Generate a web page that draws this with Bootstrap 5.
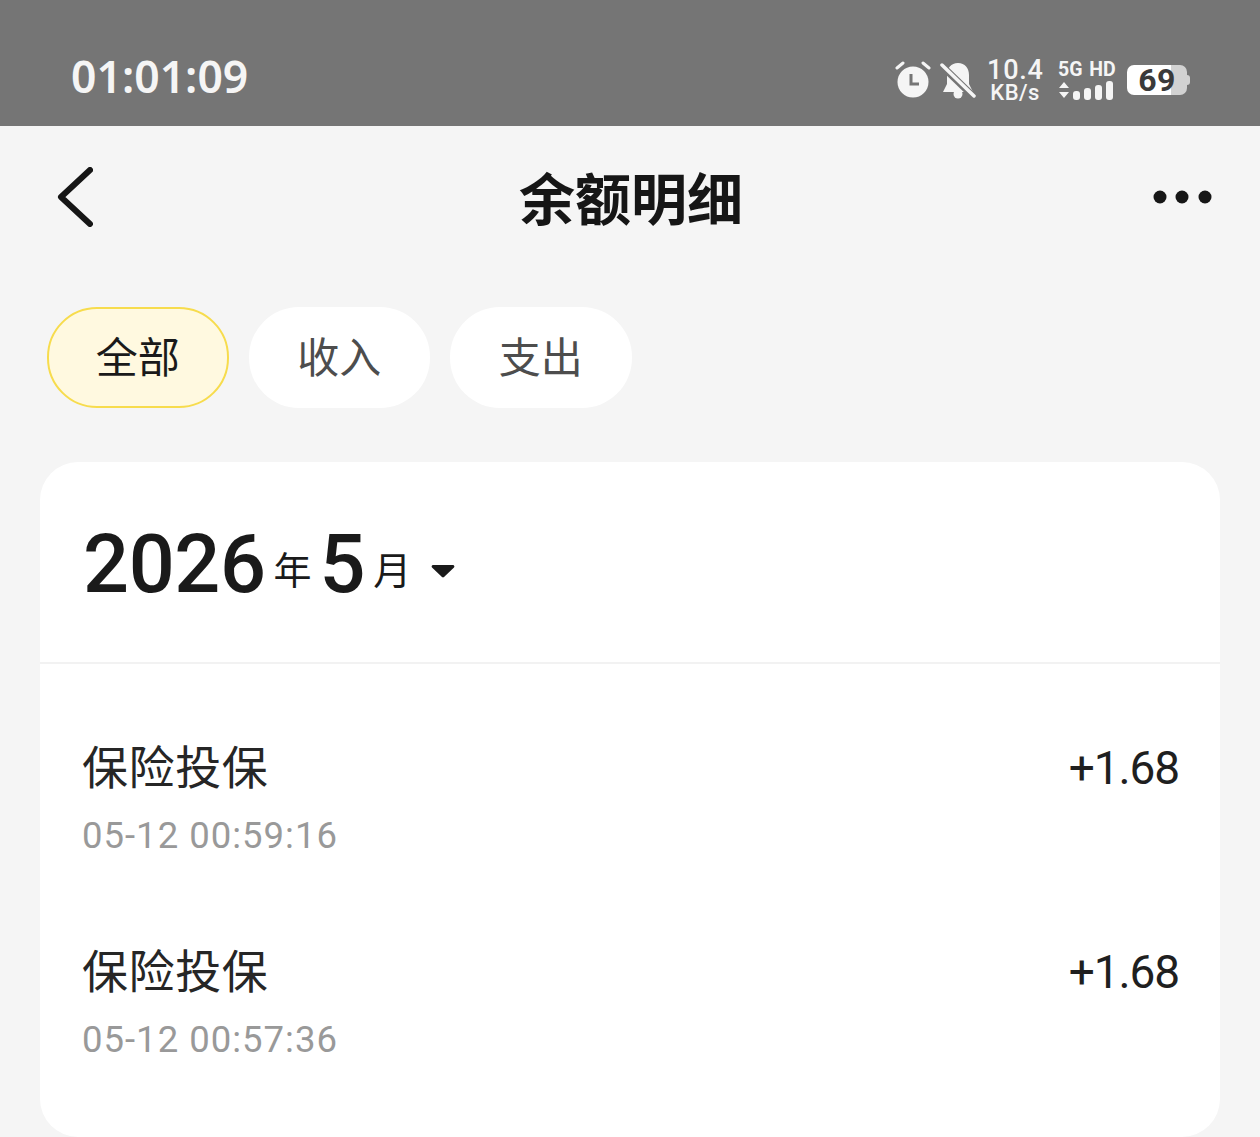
<!DOCTYPE html>
<html lang="zh">
<head>
<meta charset="utf-8">
<title>余额明细</title>
<link rel="stylesheet" href="https://cdn.jsdelivr.net/npm/bootstrap@5.3.0/dist/css/bootstrap.min.css">
<style>
html,body{height:1137px;overflow:hidden;background:#f5f5f5;font-family:Roboto,"Noto Sans CJK SC",sans-serif;color:#1a1a1a}
.sbar{height:126px;background:#757575;color:#f5f5f5;padding:54px 70px 0 71px}
.sclock{font-family:"Noto Sans",sans-serif;font-size:44.500px;font-weight:600;line-height:1}
.sicons{margin-top:3px}
.nettxt{text-align:center;margin-left:11px;width:56px;font-weight:500;padding-top:2px}
.nettxt .n1{font-size:27px;line-height:23px;letter-spacing:.8px}
.nettxt .n2{font-size:22px;line-height:21px;letter-spacing:.4px}
.sigwrap{margin-left:13px;width:59px;padding-left:2px}
.sigtxt{font-size:19.500px;font-weight:700;line-height:20px;white-space:nowrap;word-spacing:2px}
.batt{margin-left:12px;width:63px;height:30px;position:relative}
.battfill{position:absolute;left:0;top:0;width:60px;height:30px;border-radius:7px;background:linear-gradient(90deg,#fff 0 44px,#d2d2d2 44px);color:#3a3a3a;font-size:32px;font-weight:700;line-height:30px;text-align:center;letter-spacing:.5px}
.battcap{position:absolute;right:0;top:10px;width:3px;height:10px;border-radius:0 3px 3px 0;background:#d2d2d2}
.tbar{height:142px;padding:0 47px 0 57px}
.ttl{font-size:56px;font-weight:700;line-height:1;color:#161616;font-family:"Noto Sans CJK SC",sans-serif;margin-left:16px;padding-bottom:2px}
.tabsrow{gap:20px;padding:39px 0 0 47px}
.pill{width:181.500px;height:101px;border-radius:50px;background:#fff;font-size:42px;color:#4d4d4d;font-family:"Noto Sans CJK SC",sans-serif;line-height:1;padding-bottom:6px}
.pill.on{background:#fff9e0;border:2px solid #f7dc4d;color:#1a1a1a}
.sheet{margin:54px 40px 0;background:#fff;border-radius:38px;height:675px;overflow:hidden}
.mhead{height:202px;border-bottom:2px solid #f2f2f2;padding:5px 0 0 43px;font-family:"Noto Sans CJK SC",sans-serif}
.yr{font-family:Roboto,sans-serif;font-size:81px;font-weight:500;line-height:1;color:#1a1a1a;letter-spacing:-.4px}
.yu{font-size:38px;line-height:1;margin:6px 8px 0;color:#1a1a1a}
.yu.gapr{margin-right:20px}
.caret{margin-top:12px}
.rec{padding:0 41px 0 42px}
.rec1{padding-top:72px}
.rec2{padding-top:82px}
.rname{font-size:46px;line-height:56px;letter-spacing:.6px;font-family:"Noto Sans CJK SC",sans-serif;color:#262626;font-weight:400}
.ramt{font-size:46px;line-height:56px;color:#1f1f1f;letter-spacing:-1.100px;margin-top:4px}
.rtime{font-size:36.500px;line-height:44px;color:#999;margin-top:18px;letter-spacing:1px}
</style>
</head>
<body>
<div class="sbar d-flex justify-content-between">
  <div class="sclock">01:01:09</div>
  <div class="sicons d-flex align-items-center align-self-start">
    <svg width="38" height="38" viewBox="0 0 38 38"><circle cx="19" cy="21" r="15.500" fill="#f5f5f5"/><path d="M3 7 9 2M35 7 29 2" stroke="#f5f5f5" stroke-width="3" stroke-linecap="round"/><path d="M17 13v10h8" fill="none" stroke="#757575" stroke-width="3"/></svg>
    <svg class="ms-2" width="36" height="38" viewBox="0 0 36 38"><path d="M18 2c7 0 11 5 11 12v9l4 8H3l4-8v-9C7 7 11 2 18 2Z" fill="#f5f5f5"/><circle cx="18" cy="33" r="4.500" fill="#f5f5f5"/><path d="M2 5 34 36" stroke="#757575" stroke-width="7"/><path d="M2 4 34 35" stroke="#f5f5f5" stroke-width="3.500" stroke-linecap="round"/></svg>
    <div class="nettxt"><div class="n1">10.4</div><div class="n2">KB/s</div></div>
    <div class="sigwrap">
      <div class="sigtxt">5G HD</div>
      <svg width="56" height="20" viewBox="0 0 56 20" class="d-block"><path d="M6 2 11 8H1ZM6 18 1 12H11Z" fill="#f5f5f5"/><rect x="15" y="11" width="7" height="9" rx="3" fill="#f5f5f5"/><rect x="26" y="8" width="7" height="12" rx="3" fill="#f5f5f5"/><rect x="37" y="5" width="7" height="15" rx="3" fill="#f5f5f5"/><rect x="48" y="1" width="7" height="19" rx="3" fill="#f5f5f5"/></svg>
    </div>
    <div class="batt"><div class="battfill">69</div><div class="battcap"></div></div>
  </div>
</div>
<div class="tbar d-flex align-items-center justify-content-between">
  <svg width="36" height="60" viewBox="0 0 36 60"><path d="M33 3 4 30l29 27" fill="none" stroke="#161616" stroke-width="6" stroke-linecap="round" stroke-linejoin="round"/></svg>
  <div class="ttl">余额明细</div>
  <svg width="60" height="16" viewBox="0 0 60 16"><circle cx="7" cy="8" r="6.500" fill="#161616"/><circle cx="29" cy="8" r="6.500" fill="#161616"/><circle cx="52" cy="8" r="6.500" fill="#161616"/></svg>
</div>
<div class="tabsrow d-flex">
  <div class="pill on d-flex align-items-center justify-content-center">全部</div>
  <div class="pill d-flex align-items-center justify-content-center">收入</div>
  <div class="pill d-flex align-items-center justify-content-center">支出</div>
</div>
<div class="sheet">
  <div class="mhead d-flex align-items-center">
    <span class="yr">2026</span><span class="yu">年</span><span class="yr">5</span><span class="yu gapr">月</span>
    <svg class="caret" width="24" height="14" viewBox="0 0 24 14"><path d="M2 1h20a1.500 1.500 0 0 1 1 2.500L13 13a1.500 1.500 0 0 1-2 0L1 3.500A1.500 1.500 0 0 1 2 1Z" fill="#1a1a1a"/></svg>
  </div>
  <div class="rec rec1">
    <div class="d-flex justify-content-between"><span class="rname">保险投保</span><span class="ramt">+1.68</span></div>
    <div class="rtime">05-12 00:59:16</div>
  </div>
  <div class="rec rec2">
    <div class="d-flex justify-content-between"><span class="rname">保险投保</span><span class="ramt">+1.68</span></div>
    <div class="rtime">05-12 00:57:36</div>
  </div>
</div>
<script src="https://cdn.jsdelivr.net/npm/bootstrap@5.3.0/dist/js/bootstrap.bundle.min.js"></script>
</body>
</html>
